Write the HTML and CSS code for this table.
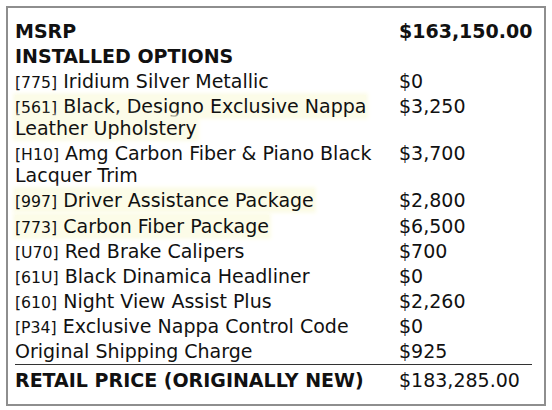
FILE: index.html
```html
<!DOCTYPE html>
<html>
<head>
<meta charset="utf-8">
<link rel="stylesheet" href="styles.css">
</head>
<body>
<div class="card">
  <div class="grid">
    <div class="label bold">MSRP</div><div class="price bold">$163,150.00</div>
    <div class="label bold full">INSTALLED OPTIONS</div>
    <div class="label"><span class="code">[775]</span> Iridium Silver Metallic</div><div class="price">$0</div>
    <div class="label"><span class="hl"><span class="code">[561]</span> Black, Designo Exclusive Nappa Leather Upholstery</span></div><div class="price">$3,250</div>
    <div class="label"><span class="code">[H10]</span> Amg Carbon Fiber &amp; Piano Black Lacquer Trim</div><div class="price">$3,700</div>
    <div class="label"><span class="hl"><span class="code">[997]</span> Driver Assistance Package</span></div><div class="price">$2,800</div>
    <div class="label"><span class="hl"><span class="code">[773]</span> Carbon Fiber Package</span></div><div class="price">$6,500</div>
    <div class="label"><span class="code">[U70]</span> Red Brake Calipers</div><div class="price">$700</div>
    <div class="label"><span class="code">[61U]</span> Black Dinamica Headliner</div><div class="price">$0</div>
    <div class="label"><span class="code">[610]</span> Night View Assist Plus</div><div class="price">$2,260</div>
    <div class="label"><span class="code">[P34]</span> Exclusive Nappa Control Code</div><div class="price">$0</div>
    <div class="label">Original Shipping Charge</div><div class="price">$925</div>
    <div class="rule full"></div>
    <div class="label bold">RETAIL PRICE (ORIGINALLY NEW)</div><div class="price">$183,285.00</div>
  </div>
</div>
</body>
</html>
```
FILE: styles.css
```css
html, body {
  margin: 0;
  padding: 0;
  background: #fff;
}
body {
  font-family: "DejaVu Sans", sans-serif;
  font-size: 19px;
  color: #111;
}
.card {
  margin: 6px 0 0 6px;
  width: 540px;
  height: 400px;
  box-sizing: border-box;
  border: 2px solid #8e8e8e;
  padding: 12px 12px 0 7px;
}
.grid {
  display: grid;
  grid-template-columns: 380px 1fr;
  column-gap: 4px;
  row-gap: 3.1px;
  line-height: 22px;
}
.full {
  grid-column: 1 / span 2;
}
.bold {
  font-weight: bold;
}
.code {
  font-size: 15.7px;
  line-height: 1;
}
.hl {
  background: #fcfce8;
  box-shadow: 0 0 4px 2px #fcfce8;
  -webkit-box-decoration-break: clone;
  box-decoration-break: clone;
}
.rule {
  border-top: 1px solid #333;
  margin: -1px 0 1px 0;
}
</style>
```
